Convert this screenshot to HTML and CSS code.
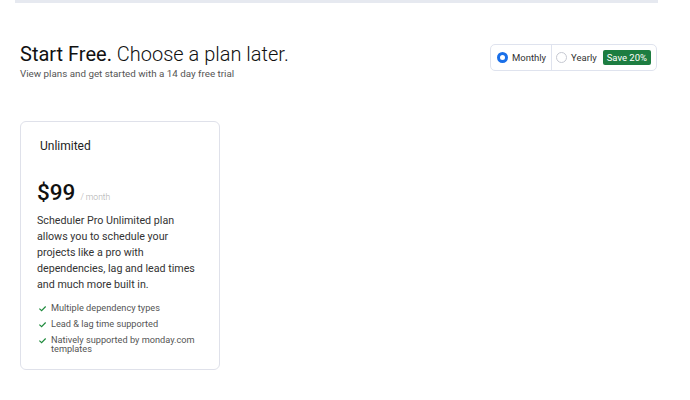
FILE: index.html
```html
<!DOCTYPE html>
<html lang="en">
<head>
    <meta charset="UTF-8">
    <meta name="viewport" content="width=device-width, initial-scale=1.0">
    <title>Pricing</title>
    <link rel="stylesheet" href="styles.css">
</head>
<body>
    <div class="top-bar"></div>
    <div class="page">
        <div class="header">
            <div class="heading">
                <h1><span class="strong">Start Free.</span> Choose a plan later.</h1>
                <p class="sub">View plans and get started with a 14 day free trial</p>
            </div>
            <div class="toggle">
                <label class="option">
                    <span class="radio checked"></span>
                    Monthly
                </label>
                <label class="option">
                    <span class="radio"></span>
                    Yearly
                    <span class="badge">Save 20%</span>
                </label>
            </div>
        </div>

        <div class="card">
            <h3 class="plan-name">Unlimited</h3>
            <div class="price">
                <span class="amount">$99</span>
                <span class="period">/ month</span>
            </div>
            <p class="desc">Scheduler Pro Unlimited plan allows you to schedule your projects like a pro with dependencies, lag and lead times and much more built in.</p>
            <ul class="features">
                <li>
                    <svg viewBox="0 0 10 10" class="check"><path d="M1.5 5.2 L4 7.5 L8.5 2.8" fill="none" stroke="#1e8a3c" stroke-width="1.3"/></svg>
                    <span>Multiple dependency types</span>
                </li>
                <li>
                    <svg viewBox="0 0 10 10" class="check"><path d="M1.5 5.2 L4 7.5 L8.5 2.8" fill="none" stroke="#1e8a3c" stroke-width="1.3"/></svg>
                    <span>Lead &amp; lag time supported</span>
                </li>
                <li>
                    <svg viewBox="0 0 10 10" class="check"><path d="M1.5 5.2 L4 7.5 L8.5 2.8" fill="none" stroke="#1e8a3c" stroke-width="1.3"/></svg>
                    <span>Natively supported by monday.com templates</span>
                </li>
            </ul>
        </div>
    </div>
</body>
</html>
```

FILE: styles.css
```css
* {
    box-sizing: border-box;
    margin: 0;
    padding: 0;
    font-family: Roboto, "Liberation Sans", sans-serif;
}

body {
    background: #ffffff;
    color: #222;
}

.top-bar {
    height: 3px;
    margin: 0 32px 0 15px;
    background: #e6e9f0;
}

.page {
    padding: 0 33px 0 20px;
}

.header {
    display: flex;
    justify-content: space-between;
    align-items: flex-start;
    margin-top: 38px;
}

h1 {
    font-size: 20px;
    font-weight: 300;
    color: #111;
    line-height: 26px;
}

h1 .strong {
    font-weight: 400;
}

.sub {
    font-size: 9.8px;
    color: #555;
    margin-top: 1px;
}

.toggle {
    display: flex;
    margin-top: 3px;
    height: 27px;
    border: 1px solid #dfe3ee;
    border-radius: 5px;
}

.option {
    display: flex;
    align-items: center;
    font-size: 9.5px;
    color: #333;
    padding: 0 5px 0 6px;
}

.option + .option {
    border-left: 1px solid #dfe3ee;
    padding-left: 4px;
}

.radio {
    width: 11px;
    height: 11px;
    border-radius: 50%;
    border: 1px solid #c6c9d2;
    margin-right: 4px;
}

.radio.checked {
    border: 3px solid #1a6fe8;
}

.badge {
    background: #1d7d41;
    color: #fff;
    font-size: 9.5px;
    line-height: 11px;
    padding: 2px 4px;
    border-radius: 2px;
    margin-left: 6px;
}

.card {
    width: 200px;
    margin-top: 42px;
    border: 1px solid #dfe1ea;
    border-radius: 6px;
    padding: 17px 16px 16px 16px;
}

.plan-name {
    font-size: 12px;
    font-weight: 400;
    color: #222;
    padding-left: 3px;
}

.price {
    margin-top: 26px;
    display: flex;
    align-items: baseline;
}

.amount {
    font-size: 22.5px;
    font-weight: 500;
    color: #111;
}

.period {
    font-size: 8.5px;
    font-weight: 300;
    color: #aaa;
    margin-left: 5px;
}

.desc {
    margin-top: 8px;
    font-size: 10.7px;
    line-height: 16px;
    color: #333;
}

.features {
    list-style: none;
    margin-top: 10px;
}

.features li {
    display: flex;
    align-items: flex-start;
    font-size: 9.2px;
    color: #555;
    line-height: 10px;
    margin-bottom: 6px;
}

.features li:last-child {
    margin-bottom: 0;
    line-height: 9px;
}

.check {
    width: 9px;
    height: 9px;
    margin: 1px 4px 0 1px;
    flex-shrink: 0;
}
```
